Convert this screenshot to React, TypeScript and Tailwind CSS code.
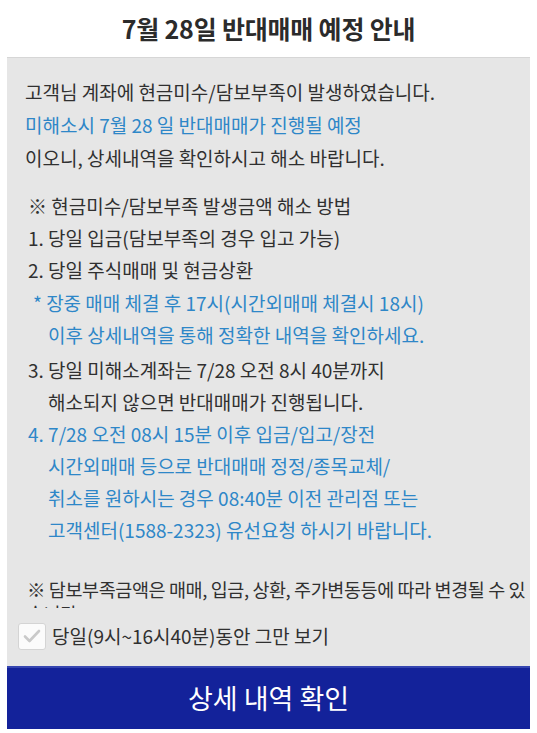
import React from 'react';

const font = { fontFamily: '"Noto Sans CJK KR", "Noto Sans", sans-serif' };

type Line = { text: string; blue?: boolean; indent: string; mt?: string };

const steps: Line[] = [
  { text: '※ 현금미수/담보부족 발생금액 해소 방법', indent: 'pl-[10px]' },
  { text: '1. 당일 입금(담보부족의 경우 입고 가능)', indent: 'pl-[10px]' },
  { text: '2. 당일 주식매매 및 현금상환', indent: 'pl-[10px]' },
  { text: '* 장중 매매 체결 후 17시(시간외매매 체결시 18시)', indent: 'pl-[15px]', blue: true, mt: 'mt-px' },
  { text: '이후 상세내역을 통해 정확한 내역을 확인하세요.', indent: 'pl-[30px]', blue: true },
  { text: '3. 당일 미해소계좌는 7/28 오전 8시 40분까지', indent: 'pl-[10px]', mt: 'mt-[3px]' },
  { text: '해소되지 않으면 반대매매가 진행됩니다.', indent: 'pl-[30px]' },
  { text: '4. 7/28 오전 08시 15분 이후 입금/입고/장전', indent: 'pl-[10px]', blue: true },
  { text: '시간외매매 등으로 반대매매 정정/종목교체/', indent: 'pl-[30px]', blue: true },
  { text: '취소를 원하시는 경우 08:40분 이전 관리점 또는', indent: 'pl-[30px]', blue: true },
  { text: '고객센터(1588-2323) 유선요청 하시기 바랍니다.', indent: 'pl-[30px]', blue: true },
];

function CheckBox() {
  return (
    <div className="w-[28px] h-[27px] bg-[#fbfbfb] border border-[#d4d4d4] rounded-[3px] flex items-center justify-center">
      <svg width="18" height="14" viewBox="0 0 18 14" fill="none">
        <path d="M2 7.5 L6.5 12 L16 2" stroke="#c9c9c9" strokeWidth="2.6" strokeLinecap="round" strokeLinejoin="round" />
      </svg>
    </div>
  );
}

export default function App() {
  return (
    <div className="w-[537px] h-[733px] bg-white flex flex-col overflow-hidden text-[#303030]" style={font}>
      <div className="h-[57px] flex items-center justify-center text-[25px] font-bold text-[#2b2b2b] tracking-[-0.2px]">
        7월 28일 반대매매 예정 안내
      </div>

      <div className="mx-[7px] bg-[#e6e6e6] border-t border-[#d6d6d6] flex flex-col">
        <div className="h-[550px] overflow-hidden pl-[18px] pr-[8px] pt-[17px] text-[19px] whitespace-nowrap">
          <div className="leading-[33px]">
            <div>고객님 계좌에 현금미수/담보부족이 발생하였습니다.</div>
            <div className="text-[#2e87c8]">미해소시 7월 28 일 반대매매가 진행될 예정</div>
            <div>이오니, 상세내역을 확인하시고 해소 바랍니다.</div>
          </div>

          <div className="mt-[16px] leading-[32px] ml-[-7px]">
            {steps.map((l, i) => (
              <div key={i} className={`${l.indent} ${l.mt ?? ''} ${l.blue ? 'text-[#2e87c8]' : ''}`}>
                {l.text}
              </div>
            ))}
          </div>

          <div className="mt-[31px] leading-[24px] pl-[2px] text-[18.5px] tracking-[-0.4px]">
            <div>※ 담보부족금액은 매매, 입금, 상환, 주가변동등에 따라 변경될 수 있</div>
            <div>습니다.</div>
          </div>
        </div>

        <div className="h-[58px] flex items-center gap-[6px] pl-[11px] pb-[2px]">
          <CheckBox />
          <span className="text-[19px]">당일(9시~16시40분)동안 그만 보기</span>
        </div>

        <div className="h-[63px] bg-[#13229a] border-t-2 border-[#3545b0] flex items-center justify-center text-white text-[27px]">
          상세 내역 확인
        </div>
      </div>
    </div>
  );
}
